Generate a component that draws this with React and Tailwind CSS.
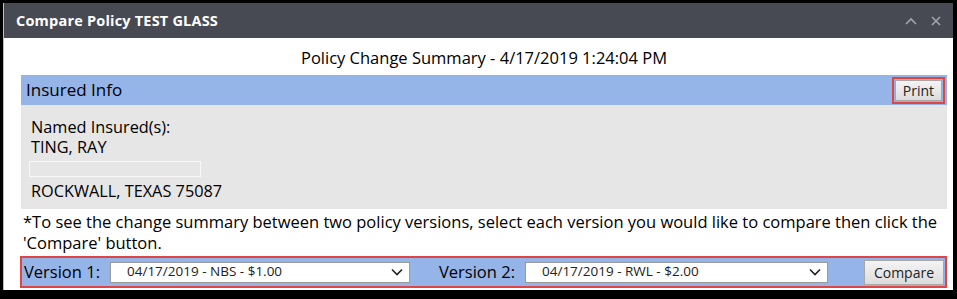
import React from 'react';

const font = { fontFamily: '"Open Sans", "Noto Sans", sans-serif' };

const Chevron = () => (
  <svg width="12" height="8" viewBox="0 0 12 8" className="shrink-0">
    <path d="M1 1.5 L6 6.5 L11 1.5" fill="none" stroke="#222" strokeWidth="1.6" />
  </svg>
);

const VersionSelect = ({ value, width }) => (
  <div
    className={`flex items-center h-[21px] bg-white border border-[#9a9a9a] pl-[16px] pr-[6px] text-[13.5px] font-medium text-[#222] ${width}`}
  >
    <span className="flex-1 leading-none">{value}</span>
    <Chevron />
  </div>
);

const GrayButton = ({ children, className = '' }) => (
  <div
    className={`flex items-center justify-center bg-gradient-to-b from-[#f4f4f4] to-[#dcdcdc] border border-[#a8a8a8] text-[14px] font-medium text-[#222] ${className}`}
  >
    {children}
  </div>
);

const App = () => {
  return (
    <div className="w-[957px] h-[299px] bg-black pt-[3px] pl-[3px] pr-[4px] pb-[9px]" style={font}>
      <div className="flex flex-col h-full bg-white border-l border-[#bdbdbd]">
        {/* Title bar */}
        <div className="flex items-center h-[35px] bg-[#474a53] pl-[12px] pr-[12px]">
          <span className="flex-1 text-white text-[14.5px] font-bold tracking-[0.2px]">Compare Policy TEST GLASS</span>
          <svg width="12" height="8" viewBox="0 0 12 8" className="mr-[14px]">
            <path d="M1 7 L6 2 L11 7" fill="none" stroke="#a3a5ad" strokeWidth="1.6" />
          </svg>
          <svg width="10" height="10" viewBox="0 0 10 10">
            <path d="M1 1 L9 9 M9 1 L1 9" fill="none" stroke="#a3a5ad" strokeWidth="1.6" />
          </svg>
        </div>

        <div className="flex flex-col pl-[17px] pr-[6px] text-black font-medium">
          {/* Heading */}
          <div className="h-[37px] flex items-center justify-center pt-[4px] text-[16.5px]">
            Policy Change Summary - 4/17/2019 1:24:04 PM
          </div>

          {/* Insured Info */}
          <div className="flex items-center h-[30px] bg-[#95b4e8] pl-[5px] pr-[2px]">
            <span className="flex-1 text-[17px]">Insured Info</span>
            <div className="border-2 border-[#e04545] h-[27px] w-[53px] p-[1px]">
              <GrayButton className="h-full w-full">Print</GrayButton>
            </div>
          </div>
          <div className="bg-[#e6e6e6] h-[104px] pt-[12px] pl-[10px] text-[16.3px] leading-[20px]">
            <div>Named Insured(s):</div>
            <div>TING, RAY</div>
            <div className="mt-[4px] -ml-[2px] h-[16px] w-[172px] border border-[#f8f8f8]" />
            <div className="mt-[4px]">ROCKWALL, TEXAS 75087</div>
          </div>

          {/* Instructions */}
          <p className="pl-[2px] pt-[2px] text-[16.5px] leading-[21px]">
            *To see the change summary between two policy versions, select each version you would like to compare then click the
            'Compare' button.
          </p>

          {/* Version compare bar */}
          <div className="mt-[3px] -ml-[1px] h-[32px] border-2 border-[#e04545] bg-[#95b4e8] flex items-center pl-[2px] pr-[1px]">
            <span className="text-[16.5px] w-[86px]">Version 1:</span>
            <VersionSelect value="04/17/2019 - NBS - $1.00" width="w-[300px]" />
            <span className="ml-[29px] text-[16.5px] w-[86px]">Version 2:</span>
            <VersionSelect value="04/17/2019 - RWL - $2.00" width="w-[303px]" />
            <GrayButton className="ml-auto h-[25px] w-[80px]">Compare</GrayButton>
          </div>
        </div>
      </div>
    </div>
  );
};

export default App;
